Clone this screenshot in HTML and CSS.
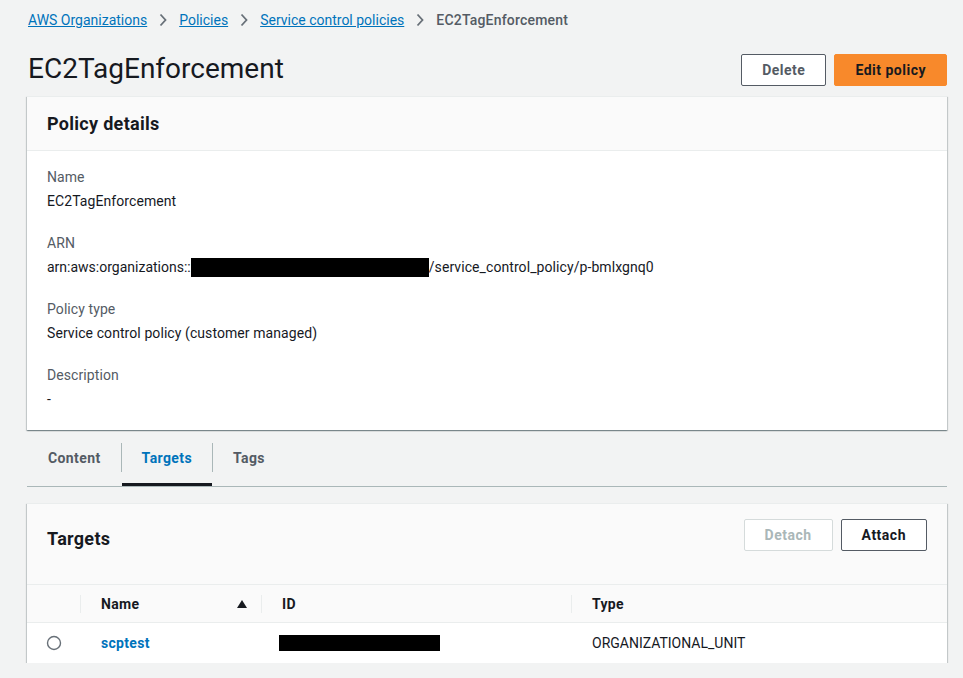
FILE: index.html
```html
<!DOCTYPE html>
<html lang="en">
<head>
<meta charset="utf-8">
<title>EC2TagEnforcement</title>
<link rel="stylesheet" href="styles.css">
</head>
<body>
<div class="page">
  <nav class="breadcrumbs">
    <a href="#">AWS Organizations</a>
    <svg class="chev" viewBox="0 0 8 14" width="8" height="14"><path d="M1.5 1.5 L6.5 7 L1.5 12.5" fill="none" stroke="#687078" stroke-width="1.8"/></svg>
    <a href="#">Policies</a>
    <svg class="chev" viewBox="0 0 8 14" width="8" height="14"><path d="M1.5 1.5 L6.5 7 L1.5 12.5" fill="none" stroke="#687078" stroke-width="1.8"/></svg>
    <a href="#">Service control policies</a>
    <svg class="chev" viewBox="0 0 8 14" width="8" height="14"><path d="M1.5 1.5 L6.5 7 L1.5 12.5" fill="none" stroke="#687078" stroke-width="1.8"/></svg>
    <span class="current">EC2TagEnforcement</span>
  </nav>

  <header class="page-header">
    <h1>EC2TagEnforcement</h1>
    <div class="actions">
      <button class="btn">Delete</button>
      <button class="btn primary">Edit policy</button>
    </div>
  </header>

  <section class="card">
    <div class="card-header"><h2>Policy details</h2></div>
    <div class="card-body">
      <div class="field">
        <div class="label">Name</div>
        <div class="value">EC2TagEnforcement</div>
      </div>
      <div class="field">
        <div class="label">ARN</div>
        <div class="value"><span class="tight">arn:aws:organizations::</span><span class="redact arn"></span>/service_control_policy/p-bmlxgnq0</div>
      </div>
      <div class="field">
        <div class="label">Policy type</div>
        <div class="value">Service control policy (customer managed)</div>
      </div>
      <div class="field">
        <div class="label">Description</div>
        <div class="value">-</div>
      </div>
    </div>
  </section>

  <div class="tabs">
    <a class="tab" href="#">Content</a>
    <a class="tab active" href="#">Targets</a>
    <a class="tab" href="#">Tags</a>
  </div>

  <section class="card table-card">
    <div class="table-header">
      <h2>Targets</h2>
      <div class="actions">
        <button class="btn disabled">Detach</button>
        <button class="btn dark">Attach</button>
      </div>
    </div>
    <div class="thead">
      <div class="th c1"></div>
      <div class="th c2 sep">Name <svg class="sort" viewBox="0 0 10 8" width="10" height="8"><path d="M5 0 L10 8 L0 8 Z" fill="#16191f"/></svg></div>
      <div class="th c3 sep">ID</div>
      <div class="th c4 sep">Type</div>
    </div>
    <div class="trow">
      <div class="td c1"><svg viewBox="0 0 16 16" width="16" height="16"><circle cx="8" cy="8" r="6.5" fill="#fff" stroke="#687078" stroke-width="1.4"/></svg></div>
      <div class="td c2"><a class="name-link" href="#">scptest</a></div>
      <div class="td c3"><span class="redact id"></span></div>
      <div class="td c4">ORGANIZATIONAL_UNIT</div>
    </div>
  </section>
</div>
</body>
</html>
```

FILE: styles.css
```css
* { box-sizing: border-box; }
body {
  margin: 0;
  background: #f2f3f3;
  font-family: Roboto, "Noto Sans", Arial, sans-serif;
  font-size: 14px;
  color: #16191f;
}
.page {
  padding: 10px 16px 0 27px;
}
.breadcrumbs {
  display: flex;
  align-items: center;
  height: 20px;
  line-height: 20px;
  padding-left: 1px;
}
.breadcrumbs a {
  color: #0073bb;
  text-decoration: underline;
}
.chev {
  margin: 0 12px;
}
.current {
  color: #545b64;
  font-weight: 500;
  letter-spacing: 0.2px;
}
.page-header {
  display: flex;
  justify-content: space-between;
  align-items: center;
  height: 40px;
  margin-top: 20px;
  margin-bottom: 6px;
}
h1 {
  margin: 0 0 0 1px;
  font-size: 28px;
  line-height: 36px;
  font-weight: 400;
  color: #16191f;
  position: relative;
  top: -1px;
}
.actions {
  display: flex;
  gap: 8px;
}
.btn {
  font-family: inherit;
  font-size: 14px;
  font-weight: 700;
  height: 32px;
  padding: 0 20px;
  border-radius: 2px;
  border: 1px solid #545b64;
  background: #fff;
  color: #545b64;
  letter-spacing: 0.5px;
}
.btn.primary {
  background: #f8892b;
  border-color: #f8892b;
  color: #16191f;
}
.btn.disabled {
  border-color: #d5dbdb;
  color: #aab7b8;
}
.btn.dark {
  color: #16191f;
}
.card {
  background: #fff;
  border-top: 1px solid #eaeded;
  box-shadow: 0 1px 1px 0 rgba(0,28,36,.3), 1px 1px 1px 0 rgba(0,28,36,.15), -1px 1px 1px 0 rgba(0,28,36,.15);
}
.card-header {
  background: #fafafa;
  height: 54px;
  padding: 0 20px;
  display: flex;
  align-items: center;
  border-bottom: 1px solid #eaeded;
}
h2 {
  margin: 0;
  font-size: 18px;
  font-weight: 700;
  line-height: 24px;
  letter-spacing: 0.3px;
}
.card-body {
  padding: 14px 20px 19px;
  display: flex;
  flex-direction: column;
  gap: 18px;
  letter-spacing: 0.08px;
}
.label {
  color: #545b64;
  line-height: 24px;
}
.value {
  line-height: 24px;
  display: flex;
  align-items: center;
}
.tight {
  letter-spacing: 0;
}
.redact {
  display: inline-block;
  background: #000;
}
.redact.arn {
  width: 238px;
  height: 19px;
}
.redact.id {
  width: 161px;
  height: 16px;
}
.tabs {
  display: flex;
  margin-top: 6px;
  border-bottom: 1px solid #aab7b8;
  margin-bottom: 16px;
}
.tab {
  position: relative;
  display: block;
  height: 50px;
  padding: 10px 20px 0;
  line-height: 24px;
  font-weight: 700;
  color: #545b64;
  text-decoration: none;
  letter-spacing: 0.4px;
}
.tab:first-child {
  padding-left: 21px;
}
.tab + .tab::before {
  content: "";
  position: absolute;
  left: 0;
  top: 7px;
  height: 29px;
  width: 1px;
  background: #aab7b8;
}
.tab + .tab {
  padding-left: 21px;
}
.tab.active {
  color: #0073bb;
}
.tab.active::after {
  content: "";
  position: absolute;
  left: 1px;
  right: 0;
  bottom: 0;
  height: 3px;
  background: #16191f;
}
.table-card {
  background: #fafafa;
}
.table-header {
  display: flex;
  justify-content: space-between;
  align-items: flex-start;
  padding: 15px 20px 0 20px;
  height: 80px;
}
.table-header h2 {
  margin-top: 8px;
}
.thead, .trow {
  display: flex;
}
.thead {
  height: 39px;
  border-top: 1px solid #eaeded;
  border-bottom: 1px solid #eaeded;
  align-items: center;
  font-weight: 700;
  letter-spacing: 0.3px;
}
.trow {
  background: #fff;
  height: 40px;
  align-items: center;
}
.th, .td {
  position: relative;
  display: flex;
  align-items: center;
  height: 100%;
}
.c1 { width: 53px; justify-content: flex-start; padding-left: 19px; }
.c2 { width: 181px; padding-left: 21px; }
.c3 { width: 310px; padding-left: 21px; }
.c4 { flex: 1; padding-left: 21px; }
.th.sep::before {
  content: "";
  position: absolute;
  left: 0;
  top: 10px;
  bottom: 9px;
  width: 1px;
  background: #eaeded;
}
.th.c2 {
  justify-content: space-between;
  padding-right: 14px;
}
.sort { display: block; }
.td.c3 { padding-left: 18px; }
.name-link {
  color: #0073bb;
  font-weight: 700;
  text-decoration: none;
  letter-spacing: 0.3px;
}
```
